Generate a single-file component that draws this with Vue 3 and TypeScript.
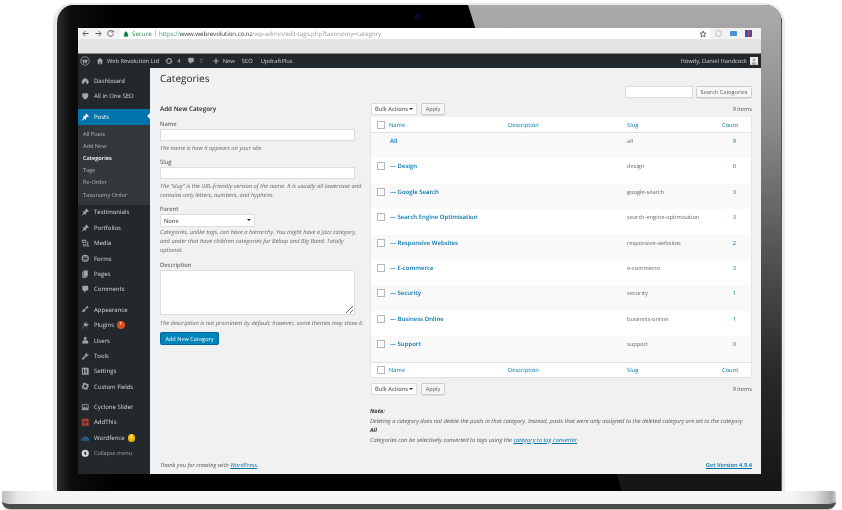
<script setup lang="ts">
interface MenuItem { label: string; icon: string; badge?: string; badgeClass?: string; muted?: boolean }
const P: Record<string, string> = {
  dash: 'M3.8 16.5A8 8 0 1 1 16.2 16.5H13.2A2.6 2.6 0 0 0 11 12.6L13.6 6.6 9.6 12.4A2.7 2.7 0 0 0 6.9 16.5Z',
  shield: 'M3 3.5C7 2.5 13 2.5 17 3.5V9C17 13 13.5 16 10 18 6.5 16 3 13 3 9Z',
  pin: 'M10.44 3.02l1.82-1.82 6.36 6.35-1.83 1.82c-1.05-.68-2.48-.57-3.41.36l-.75.75c-.92.93-1.04 2.35-.35 3.41l-1.83 1.82-2.41-2.41-2.8 2.79c-.42.42-3.38 2.71-3.8 2.29s1.86-3.39 2.28-3.81l2.79-2.79L4.1 9.36l1.83-1.82c1.05.69 2.48.57 3.4-.36l.75-.75c.93-.92 1.05-2.35.36-3.41z',
  media: 'M2 2H12V9H2ZM4 4V7H10V4ZM13 5H15V11H8V13H17V5ZM5 11H7V15H14V17H5ZM15 14H18V18H15Z',
  forms: 'M10 1.5A8.5 8.5 0 1 1 10 18.5 8.5 8.5 0 0 1 10 1.5ZM5 6V8H15V6ZM4.5 9.5V11.5H15.5V9.5ZM5 13V15H15V13Z',
  pages: 'M6 1H16V15H6ZM3 4H5V16H13V18H3Z',
  comment: 'M5 2h10c1.1 0 2 .9 2 2v7c0 1.1-.9 2-2 2h-3l-5 5v-5H5c-1.1 0-2-.9-2-2V4c0-1.1.9-2 2-2z',
  brush: 'M14.5 2 18 5.5 12 10 10 8ZM9 9 11 11 8 17 6 15 3.5 17 2 15.5 5 13 3 11Z',
  plug: 'M12 2 14 4 11.5 6.5 13.5 8.5 16 6 18 8 14 12 14.5 15 11 12H8L3 18 2 17 7 11.5V8.5L4.5 6 8 6.5Z',
  user: 'M10 2.5A3.5 3.5 0 1 1 10 9.5 3.5 3.5 0 0 1 10 2.5ZM7.5 10H12.5C15 10 17 12 17 14.5V17.5H3V14.5C3 12 5 10 7.5 10Z',
  tool: 'M17.5 6C17.5 8.5 15.5 10.5 13 10.5L12 10.3 5.5 17.5C4.8 18.2 3.5 18.2 2.8 17.5S2 15.5 2.7 14.8L9.7 8 9.5 7C9.5 4.5 11.5 2.5 14 2.5L15.5 2.8 12.8 5.5 14.5 7.2 17.2 4.5Z',
  sliders: 'M2 2H18V18H2ZM5 4V8H3.8V10H5V16H7V10H8.2V8H7V4ZM11 4V10H9.8V12H11V16H13V12H14.2V10H13V4Z',
  gear: 'M8.5 1.5H11.5L12 4 14 4.9 16.2 3.5 18.3 5.6 16.9 7.8 17.8 10 18.5 10 18.5 11.5 16 12 15.1 14 16.5 16.2 14.4 18.3 12.2 16.9 11.5 17.2 11 18.5H8.5L8 16 6 15.1 3.8 16.5 1.7 14.4 3.1 12.2 2.2 10H1.5V8.5L4 8 4.9 6 3.5 3.8 5.6 1.7 7.8 3.1 8.5 2.8ZM10 6.5A3.5 3.5 0 1 0 10 13.5 3.5 3.5 0 0 0 10 6.5Z',
  slider: 'M2 3H18V17H2ZM4 5V12L8 8 11 11 13 9 16 12V5Z',
  plus: 'M2 2H18V18H2ZM9 5V9H5V11H9V15H11V11H15V9H11V5Z',
  wf: 'M1 10H4V16H1ZM5 7H8V16H5ZM9 5H12V16H9ZM13 7H16V16H13ZM16.5 10H19V16H16.5Z',
  collapse: 'M10 1.5A8.5 8.5 0 1 1 10 18.5 8.5 8.5 0 0 1 10 1.5ZM12 5.5 6.5 10 12 14.5Z',
}
const topMenu: MenuItem[] = [
  { label: 'Dashboard', icon: 'dash' },
  { label: 'All in One SEO', icon: 'shield' },
]
const subMenu = ['All Posts', 'Add New', 'Categories', 'Tags', 'Re-Order', 'Taxonomy Order']
const menuA: MenuItem[] = [
  { label: 'Testimonials', icon: 'pin' }, { label: 'Portfolios', icon: 'pin' }, { label: 'Media', icon: 'media' },
  { label: 'Forms', icon: 'forms' }, { label: 'Pages', icon: 'pages' }, { label: 'Comments', icon: 'comment' },
]
const menuB: MenuItem[] = [
  { label: 'Appearance', icon: 'brush' }, { label: 'Plugins', icon: 'plug', badge: '1', badgeClass: 'orange' },
  { label: 'Users', icon: 'user' }, { label: 'Tools', icon: 'tool' }, { label: 'Settings', icon: 'sliders' },
  { label: 'Custom Fields', icon: 'gear' },
]
const menuC: MenuItem[] = [
  { label: 'Cyclone Slider', icon: 'slider' }, { label: 'AddThis', icon: 'plus' },
  { label: 'Wordfence', icon: 'wf', badge: '2', badgeClass: 'yellow' }, { label: 'Collapse menu', icon: 'collapse', muted: true },
]
const groups = [menuA, menuB, menuC]
const rows = [
  { name: 'All', slug: 'all', count: '9', locked: true },
  { name: '— Design', slug: 'design', count: '0' },
  { name: '— Google Search', slug: 'google-search', count: '3' },
  { name: '— Search Engine Optimisation', slug: 'search-engine-optimisation', count: '3' },
  { name: '— Responsive Websites', slug: 'responsive-websites', count: '2' },
  { name: '— E-commerce', slug: 'e-commerce', count: '3' },
  { name: '— Security', slug: 'security', count: '1' },
  { name: '— Business Online', slug: 'business-online', count: '1' },
  { name: '— Support', slug: 'support', count: '0' },
]
</script>

<template>
  <div class="page">
    <div class="lid">
      <div class="glare"></div>
      <div class="camera"></div>
      <div class="screen">
        <div class="chrome">
          <div class="urlrow">
            <div class="navbtns">
              <svg viewBox="0 0 12 12" class="nav"><path d="M10 6H3M6 2.5 2.5 6 6 9.5" /></svg>
              <svg viewBox="0 0 12 12" class="nav"><path d="M2 6H9M6 2.5 9.5 6 6 9.5" /></svg>
              <svg viewBox="0 0 12 12" class="nav"><path d="M9.8 6A3.8 3.8 0 1 1 8.6 3.2M9.5 1.5V4H7" /></svg>
            </div>
            <div class="url">
              <svg viewBox="0 0 10 10" class="lock"><path d="M2 4.5H8V9H2ZM3.2 4.5V3A1.8 1.8 0 0 1 6.8 3V4.5" /></svg>
              <span class="secure">Secure</span>
              <span class="sep"></span>
              <span class="addr"><span class="green">https://</span><span class="dark">www.webrevolution.co.nz</span><span class="light">/wp-admin/edit-tags.php?taxonomy=category</span></span>
              <span class="spacer"></span>
              <svg viewBox="0 0 20 20" class="star"><path d="M10 2.5 12.2 7.6 17.6 8.1 13.5 11.7 14.7 17 10 14.2 5.3 17 6.5 11.7 2.4 8.1 7.8 7.6Z" /></svg>
            </div>
            <div class="exts">
              <span class="ext e1"></span>
              <span class="ext e2"></span>
              <span class="ext e3"></span>
            </div>
          </div>
          <div class="tabbar"></div>
        </div>
        <div class="adminbar">
          <svg viewBox="0 0 20 20" class="wplogo"><circle cx="10" cy="10" r="8.6" fill="none" stroke="#a0a5aa" stroke-width="1.5" /><path fill="#a0a5aa" d="M4 7.5 7.6 16.5 9.6 11 8.2 7.5ZM9 7.5 12.4 16.5 14.6 10C15.2 8 14.6 6.8 14 6.2L13.6 7.5H9Z" /></svg>
          <svg viewBox="0 0 20 20" class="abicon home"><path d="M10 2 18 10H15.5V18H11.5V13H8.5V18H4.5V10H2Z" /></svg>
          <span class="abtext site">Web Revolution Ltd</span>
          <svg viewBox="0 0 20 20" class="abicon upd"><circle cx="10" cy="10" r="6" fill="none" stroke="#a0a5aa" stroke-width="2.6" /><path d="M1 10H7L4 6.5ZM19 10H13L16 13.5Z" /></svg>
          <span class="abtext four">4</span>
          <svg viewBox="0 0 20 20" class="abicon cmt"><path :d="P.comment" /></svg>
          <span class="abtext zero">0</span>
          <svg viewBox="0 0 20 20" class="abicon plus"><path d="M8.5 3H11.5V8.5H17V11.5H11.5V17H8.5V11.5H3V8.5H8.5Z" /></svg>
          <span class="abtext new">New</span>
          <span class="abtext seo">SEO</span>
          <span class="abtext upfl">UpdraftPlus</span>
          <span class="spacer"></span>
          <span class="abtext howdy">Howdy, Daniel Handcock</span>
          <span class="avatar"><svg viewBox="0 0 20 20"><path fill="#aaa" d="M10 4A3.6 3.6 0 1 1 10 11.2 3.6 3.6 0 0 1 10 4ZM3.5 20C3.5 14.5 6 12.5 10 12.5S16.5 14.5 16.5 20Z" /></svg></span>
        </div>
        <div class="workspace">
          <aside class="sidebar">
            <div class="menu-group">
              <div v-for="m in topMenu" :key="m.label" class="mi">
                <svg viewBox="0 0 20 20" class="mic"><path :d="P[m.icon]" /></svg><span>{{ m.label }}</span>
              </div>
            </div>
            <div class="mi active">
              <svg viewBox="0 0 20 20" class="mic"><path :d="P.pin" /></svg><span>Posts</span>
              <i class="arrow"></i>
            </div>
            <div class="submenu">
              <div v-for="s in subMenu" :key="s" class="si" :class="{ cur: s === 'Categories' }">{{ s }}</div>
            </div>
            <div v-for="(g, i) in groups" :key="i" class="menu-group g2">
              <div v-for="m in g" :key="m.label" class="mi" :class="{ muted: m.muted }">
                <svg viewBox="0 0 20 20" class="mic" :class="'ic-' + m.icon"><path :d="P[m.icon]" /></svg>
                <span>{{ m.label }}</span>
                <b v-if="m.badge" class="badge" :class="m.badgeClass">{{ m.badge }}</b>
              </div>
            </div>
          </aside>
          <main class="content">
            <div class="titlerow"><h1>Categories</h1></div>
            <div class="searchrow">
              <input class="search" type="text" aria-label="Search" />
              <span class="btn sbtn">Search Categories</span>
            </div>
            <div class="cols">
              <section class="left">
                <h2>Add New Category</h2>
                <label class="lbl l1">Name</label>
                <input class="inp" type="text" aria-label="Name" />
                <p class="hint">The name is how it appears on your site.</p>
                <label class="lbl">Slug</label>
                <input class="inp" type="text" aria-label="Slug" />
                <p class="hint">The “slug” is the URL-friendly version of the name. It is usually all lowercase and contains only letters, numbers, and hyphens.</p>
                <label class="lbl">Parent</label>
                <div class="sel parent"><span>None</span><i class="tri"></i></div>
                <p class="hint tight">Categories, unlike tags, can have a hierarchy. You might have a Jazz category, and under that have children categories for Bebop and Big Band. Totally optional.</p>
                <label class="lbl">Description</label>
                <textarea class="ta" aria-label="Description"></textarea>
                <p class="hint last">The description is not prominent by default; however, some themes may show it.</p>
                <span class="primary">Add New Category</span>
              </section>
              <section class="right">
                <div class="tablenav">
                  <div class="sel bulk"><span>Bulk Actions</span><i class="tri"></i></div>
                  <span class="btn apply">Apply</span>
                  <span class="spacer"></span>
                  <span class="items">9 items</span>
                </div>
                <div class="table">
                  <div class="tr head">
                    <div class="c cb"><i class="check"></i></div>
                    <div class="c">Name</div><div class="c">Description</div><div class="c">Slug</div><div class="c cnt-h">Count</div>
                  </div>
                  <div v-for="(r, i) in rows" :key="r.slug" class="tr body" :class="{ alt: i % 2 === 0 }">
                    <div class="c cb"><i v-if="!r.locked" class="check"></i></div>
                    <div class="c nm">{{ r.name }}</div>
                    <div class="c"></div>
                    <div class="c sl">{{ r.slug }}</div>
                    <div class="c num">{{ r.count }}</div>
                  </div>
                  <div class="tr head foot">
                    <div class="c cb"><i class="check"></i></div>
                    <div class="c">Name</div><div class="c">Description</div><div class="c">Slug</div><div class="c cnt-h">Count</div>
                  </div>
                </div>
                <div class="tablenav nav2">
                  <div class="sel bulk"><span>Bulk Actions</span><i class="tri"></i></div>
                  <span class="btn apply">Apply</span>
                  <span class="spacer"></span>
                  <span class="items">9 items</span>
                </div>
                <div class="notes">
                  <p><b>Note:</b></p>
                  <p>Deleting a category does not delete the posts in that category. Instead, posts that were only assigned to the deleted category are set to the category <b class="block">All</b></p>
                  <p>Categories can be selectively converted to tags using the <a>category to tag converter</a>.</p>
                </div>
              </section>
            </div>
            <span class="spacer"></span>
            <footer class="foot-bar">
              <em>Thank you for creating with <a>WordPress</a>.</em>
              <a class="ver">Get Version 4.9.4</a>
            </footer>
          </main>
        </div>
      </div>
    </div>
    <div class="base"></div>
  </div>
</template>

<style>
html, body { margin: 0; background: #fff; }
</style>

<style scoped>
.page { width: 842px; height: 510px; overflow: hidden; background: #fff; font-family: "Open Sans", "Noto Sans", sans-serif; color: #444; padding-top: 3px; box-sizing: border-box; text-rendering: geometricPrecision; }
.lid { position: relative; width: 732px; height: 488px; margin-left: 53px; box-sizing: border-box; border: solid #eaeaea; border-width: 2px 3px 0 4px; border-radius: 20px 20px 0 0; padding: 23px 21px 17px; overflow: hidden;
  background: linear-gradient(90deg, #2c2c2c 0, #0c0c0c 14px, #000 60px), #000; }
.glare { position: absolute; inset: 0; background: linear-gradient(180deg, #ababab 0, #8a8a8a 25%, #555 50%, #2a2a2a 75%, #151515 100%); clip-path: polygon(411px 0, 100% 0, 100% 100%, 565px 100%); border-right: 1px solid #555; }
.camera { position: absolute; top: 9px; left: 358px; width: 5px; height: 5px; border-radius: 50%; background: #0a0630; box-shadow: inset 0 0 1px 1px #14084c; }
.screen { position: relative; height: 446px; display: flex; flex-direction: column; background: #f1f1f1; filter: blur(.35px); }
.chrome { height: 26px; flex: none; display: flex; flex-direction: column; }
.urlrow { height: 11px; display: flex; background: #f2f2f2; }
.navbtns { width: 42px; padding-left: 3px; display: flex; gap: 3.5px; align-items: center; box-sizing: border-box; }
.nav { width: 9px; height: 9px; fill: none; stroke: #5a5a5a; stroke-width: 1.3; }
.url { flex: 1; background: #fff; display: flex; align-items: center; font-size: 6.2px; }
.lock { width: 6px; height: 6px; margin-left: 3px; fill: #0b8043; stroke: #0b8043; stroke-width: .8; }
.secure { color: #2d8a4e; margin-left: 3px; width: 20px; }
.sep { width: 1px; height: 7px; background: #ccc; margin: 0 3px 0 3px; }
.addr { white-space: nowrap; letter-spacing: -.01em; }
.green { color: #3d9a60; } .dark { color: #333; } .light { color: #999; }
.star { width: 8px; height: 8px; fill: none; stroke: #333; stroke-width: 1.8; margin-right: 3px; }
.spacer { flex: 1; }
.exts { width: 51px; display: flex; align-items: center; box-sizing: border-box; padding-left: 5px; gap: 8px; }
.ext { width: 7px; height: 7px; display: block; }
.e1 { border-radius: 50%; border: 1px solid #bbb; box-sizing: border-box; }
.e2 { background: #4a90d9; border-radius: 1px; width: 7px; height: 5px; }
.e3 { background: linear-gradient(90deg, #2a57c9 0 40%, #e0402a 40% 60%, #2a57c9 60%); }
.tabbar { height: 14px; background: #e4e4e4; border-bottom: 1px solid #888; box-sizing: content-box; }
.adminbar { height: 14px; background: #23282d; display: flex; align-items: center; flex: none; color: #d0d3d6; font-size: 5.75px; }
.wplogo { width: 10px; height: 10px; margin-left: 2px; }
.abicon { width: 8px; height: 8px; fill: #a0a5aa; flex: none; }
.home { margin-left: 6px; }
.site { margin-left: 3px; }
.upd { margin-left: 6px; }
.four { margin-left: 4px; }
.cmt { margin-left: 7px; }
.zero { margin-left: 4px; color: #7c8186; }
.plus { margin-left: 9px; }
.new { margin-left: 3px; }
.seo { margin-left: 7px; }
.upfl { margin-left: 8px; }
.abtext { white-space: nowrap; }
.avatar { width: 8px; height: 8px; background: #eee; margin: 0 3px 0 3px; display: block; }
.avatar svg { display: block; }
.workspace { flex: 1; display: flex; min-height: 0; }
.sidebar { width: 72px; flex: none; background: #23282d; color: #d8dadc; font-size: 6px; padding-top: 5.4px; box-sizing: border-box; }
.menu-group { display: flex; flex-direction: column; }
.mi { position: relative; height: 15.4px; display: flex; align-items: center; padding-left: 3px; box-sizing: border-box; white-space: nowrap; }
.mic { width: 8.5px; height: 8.5px; fill: #a0a5aa; margin-right: 4.5px; flex: none; }
.active { background: #0073aa; color: #fff; margin-top: 5px; }
.active .mic { fill: #fff; }
.arrow { position: absolute; right: 0; top: 4px; border: 3.6px solid transparent; border-right-color: #f1f1f1; border-left-width: 0; }
.submenu { background: #32373c; padding: 3px 0 4px; color: #b4b9be; font-size: 5.6px; }
.si { height: 12.2px; line-height: 12.2px; padding-left: 5px; }
.cur { color: #fff; font-weight: 600; }
.g2 + .g2 { margin-top: 5px; }
.muted { color: #a0a5aa; font-size: 5.5px; }
.ic-plus { fill: #a84333; }
.ic-wf { fill: #1d6f9f; }
.ic-collapse { fill: #d5d7d9; }
.ic-slider { fill: #8e9296; }
.badge { width: 7.5px; height: 7.5px; border-radius: 50%; margin-left: 3px; font-size: 4.5px; color: #fff; text-align: center; line-height: 7.5px; font-weight: 600; }
.orange { background: #d54e21; } .yellow { background: #f4b30e; }
.content { flex: 1; display: flex; flex-direction: column; padding: 0 9px 0 10px; min-width: 0; }
.titlerow { height: 18px; }
h1 { font-size: 10px; font-weight: 400; margin: 0; line-height: 20px; color: #23282d; }
.searchrow { display: flex; justify-content: flex-end; gap: 3px; height: 12px; }
.search { width: 68px; height: 12px; box-sizing: border-box; border: 1px solid #ddd; background: #fff; padding: 0; }
.btn { border: 1px solid #ccc; background: #f7f7f7; border-radius: 1.5px; box-sizing: border-box; font-size: 5.6px; color: #555; display: flex; align-items: center; justify-content: center; white-space: nowrap; box-shadow: 0 .5px 0 #ccc; }
.sbtn { width: 56px; height: 12px; }
.cols { display: flex; margin-top: 5px; }
.left { width: 195px; flex: none; margin-top: 1px; color: #444; }
h2 { font-size: 6.3px; font-weight: 600; margin: 0; line-height: 10px; height: 10px; color: #23282d; }
.lbl { display: block; font-size: 5.9px; line-height: 8px; height: 8px; }
.l1 { margin-top: 6px; }
.inp { display: block; width: 100%; height: 12px; box-sizing: border-box; border: 1px solid #ddd; background: #fff; padding: 0; margin-top: 1px; }
.hint { font-style: italic; font-size: 5.77px; line-height: 9px; margin: 2.5px -10px 5.5px 0; color: #666; }
.tight { margin-top: .5px; margin-bottom: 6.5px; }
.sel { position: relative; display: flex; align-items: center; height: 12px; background: #fff; border: 1px solid #ddd; box-sizing: border-box; font-size: 5.8px; color: #32373c; padding-left: 3px; white-space: nowrap; }
.parent { width: 95px; height: 13px; margin-top: 1px; }
.tri { position: absolute; right: 3px; top: 4px; border: 2px solid transparent; border-top: 2.5px solid #222; border-bottom: 0; }
.ta { display: block; width: 100%; height: 45px; box-sizing: border-box; border: 1px solid #ddd; background: #fff; margin-top: 1px; padding: 0; }
.last { margin-top: 3.5px; margin-bottom: 4.5px; }
.primary { display: flex; align-items: center; justify-content: center; width: 59px; height: 13px; background: #0085ba; border: 1px solid #006799; border-radius: 1.5px; box-sizing: border-box; color: #fff; font-size: 5.6px; white-space: nowrap; }
.right { flex: 1; margin-left: 15px; }
.tablenav { display: flex; align-items: center; height: 12px; gap: 4px; }
.bulk { width: 46px; margin-left: 1px; }
.apply { width: 24px; height: 12px; }
.items { font-size: 5.7px; color: #555; }
.table { margin-top: 2px; background: #fff; border: 1px solid #e5e5e5; border-width: 0 1px; box-sizing: border-box; width: 382px; }
.tr { display: grid; grid-template-columns: 18px 119px 119px 91px 1fr; }
.head { height: 16px; align-items: center; color: #0073aa; font-size: 5.77px; border-bottom: 1px solid #e1e1e1; box-sizing: border-box; }
.foot { border-bottom: 1px solid #e1e1e1; border-top: 1px solid #e1e1e1; }
.body { height: 25.4px; box-sizing: border-box; font-size: 5.7px; color: #666; padding-top: 4px; }
.alt { background: #f9f9f9; }
.c { white-space: nowrap; min-width: 0; }
.cb { display: flex; justify-content: center; }
.check { width: 8px; height: 8px; display: block; background: #fff; border: 1px solid #b4b9be; box-sizing: border-box; margin-left: 1px; }
.nm { color: #0073aa; font-weight: 600; padding-left: 1px; font-size: 6px; }
.num { text-align: center; color: #0073aa; }
.cnt-h { padding-left: 4px; }
.nav2 { margin-top: 5.5px; }
.notes { font-size: 5.77px; font-style: italic; color: #555; margin-top: 12px; }
.notes p { margin: 0; line-height: 9.5px; white-space: nowrap; }
.notes b { font-weight: 700; color: #333; }
.block { display: block; }
.notes a { color: #0073aa; text-decoration: underline; }
.foot-bar { display: flex; justify-content: space-between; font-size: 5.7px; color: #555; height: 10px; margin-bottom: 4px; line-height: 10px; }
.foot-bar a { color: #0073aa; text-decoration: underline; }
.ver { font-weight: 600; }
.base { position: relative; width: 834px; height: 18px; margin-left: 2px; border-radius: 1px 1px 8px 8px; box-sizing: border-box; border-bottom: 5px solid #4b4b4b; box-shadow: 0 1px 1px #bbb;
  background: linear-gradient(90deg, #bdbdbd 0, #e8e8e8 16px, #f5f5f5 40px, #f5f5f5 790px, #e2e2e2 812px, #a9a9a9 830px, #d5d5d5 834px); }
</style>
